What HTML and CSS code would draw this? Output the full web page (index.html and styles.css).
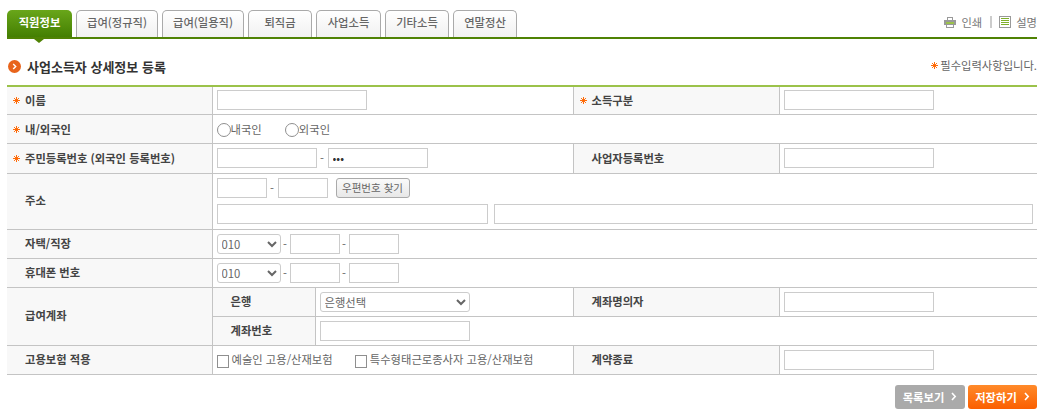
FILE: index.html
```html
<!DOCTYPE html>
<html lang="ko">
<head>
    <meta charset="UTF-8">
    <title>사업소득자 상세정보 등록</title>
    <link rel="stylesheet" href="styles.css">
</head>
<body>
    <div class="wrap">
        <div class="tabbar">
            <ul class="tabs">
                <li class="tab active w65">직원정보</li>
                <li class="tab w82">급여(정규직)</li>
                <li class="tab w82">급여(일용직)</li>
                <li class="tab w64">퇴직금</li>
                <li class="tab w65">사업소득</li>
                <li class="tab w64">기타소득</li>
                <li class="tab w64">연말정산</li>
            </ul>
            <div class="tools">
                <svg class="tool-icon" width="12" height="11" viewBox="0 0 12 11"><rect x="3.5" y="0.5" width="5" height="3" fill="#fff" stroke="#999"/><rect x="0" y="3" width="12" height="5" fill="#999"/><rect x="2" y="5" width="8" height="2" fill="#9bc24a"/><rect x="2.5" y="7.5" width="7" height="3" fill="#fff" stroke="#999"/></svg>
                <span>인쇄</span>
                <i class="sep"></i>
                <svg class="tool-icon" width="12" height="12" viewBox="0 0 12 12"><rect x="0.5" y="0.5" width="11" height="11" fill="#fff" stroke="#999"/><path d="M2 2.5h8M2 4.5h8M2 6.5h8M2 8.5h8" stroke="#7fb02a"/></svg>
                <span>설명</span>
            </div>
        </div>

        <div class="title-row">
            <h2 class="title">
                <svg width="13" height="13" viewBox="0 0 13 13"><circle cx="6.5" cy="6.5" r="6.5" fill="#e8641b"/><path d="M5.2 4l2.5 2.5-2.5 2.5" fill="none" stroke="#fff" stroke-width="1.4"/></svg>
                사업소득자 상세정보 등록
            </h2>
            <p class="req-note"><svg class="star" width="7" height="7" viewBox="0 0 8 8"><path d="M4 0v8M0 4h8M1.2 1.2l5.6 5.6M6.8 1.2l-5.6 5.6" stroke="#f60" stroke-width="1.1"/></svg>필수입력사항입니다.</p>
        </div>

        <table class="form-table">
            <colgroup>
                <col class="c-label"><col class="c-sub"><col class="c-subval"><col class="c-label2"><col class="c-val">
            </colgroup>
            <tr>
                <th><svg class="star mark" width="7" height="7" viewBox="0 0 8 8"><path d="M4 0v8M0 4h8M1.2 1.2l5.6 5.6M6.8 1.2l-5.6 5.6" stroke="#f60" stroke-width="1.1"/></svg>이름</th>
                <td colspan="2"><input class="in w150" type="text"></td>
                <th><svg class="star mark" width="7" height="7" viewBox="0 0 8 8"><path d="M4 0v8M0 4h8M1.2 1.2l5.6 5.6M6.8 1.2l-5.6 5.6" stroke="#f60" stroke-width="1.1"/></svg>소득구분</th>
                <td><input class="in w150" type="text"></td>
            </tr>
            <tr>
                <th><svg class="star mark" width="7" height="7" viewBox="0 0 8 8"><path d="M4 0v8M0 4h8M1.2 1.2l5.6 5.6M6.8 1.2l-5.6 5.6" stroke="#f60" stroke-width="1.1"/></svg>내/외국인</th>
                <td colspan="4">
                    <label class="opt opt-r"><input type="radio" name="nation">내국인</label>
                    <label class="opt opt-r"><input type="radio" name="nation">외국인</label>
                </td>
            </tr>
            <tr class="tall">
                <th><svg class="star mark" width="7" height="7" viewBox="0 0 8 8"><path d="M4 0v8M0 4h8M1.2 1.2l5.6 5.6M6.8 1.2l-5.6 5.6" stroke="#f60" stroke-width="1.1"/></svg>주민등록번호 (외국인 등록번호)</th>
                <td colspan="2"><input class="in w100" type="text"><span class="dash">-</span><input class="in w100" type="password" value="123"></td>
                <th>사업자등록번호</th>
                <td><input class="in w150" type="text"></td>
            </tr>
            <tr class="lift">
                <th>주소</th>
                <td colspan="4" class="addr-cell">
                    <div class="line">
                        <input class="in w50" type="text"><span class="dash">-</span><input class="in w50" type="text">
                        <button class="btn-zip" type="button">우편번호 찾기</button>
                    </div>
                    <div class="line addr">
                        <input class="in w271" type="text">
                        <input class="in w539" type="text">
                    </div>
                </td>
            </tr>
            <tr class="lift">
                <th>자택/직장</th>
                <td colspan="4"><select class="sel w64"><option>010</option></select><span class="dash-s">-</span><input class="in w50" type="text"><span class="dash-s">-</span><input class="in w50" type="text"></td>
            </tr>
            <tr class="lift">
                <th>휴대폰 번호</th>
                <td colspan="4"><select class="sel w64"><option>010</option></select><span class="dash-s">-</span><input class="in w50" type="text"><span class="dash-s">-</span><input class="in w50" type="text"></td>
            </tr>
            <tr class="lift">
                <th rowspan="2">급여계좌</th>
                <th>은행</th>
                <td><select class="sel w150"><option>은행선택</option></select></td>
                <th>계좌명의자</th>
                <td><input class="in w150" type="text"></td>
            </tr>
            <tr class="lift">
                <th>계좌번호</th>
                <td colspan="3"><input class="in w150" type="text"></td>
            </tr>
            <tr class="lift">
                <th>고용보험 적용</th>
                <td colspan="2" class="check-cell">
                    <label class="opt opt-c"><input type="checkbox">예술인 고용/산재보험</label>
                    <label class="opt"><input type="checkbox">특수형태근로종사자 고용/산재보험</label>
                </td>
                <th>계약종료</th>
                <td><input class="in w150" type="text"></td>
            </tr>
        </table>

        <div class="actions">
            <button class="act gray" type="button">목록보기<svg width="6" height="9" viewBox="0 0 6 9"><path d="M1 1l3.2 3.5L1 8" fill="none" stroke="#fff" stroke-width="1.6"/></svg></button>
            <button class="act orange" type="button">저장하기<svg width="6" height="9" viewBox="0 0 6 9"><path d="M1 1l3.2 3.5L1 8" fill="none" stroke="#fff" stroke-width="1.6"/></svg></button>
        </div>
    </div>
</body>
</html>
```

FILE: styles.css
```css
* {
    margin: 0;
    padding: 0;
    box-sizing: border-box;
    font-family: "Noto Sans CJK KR", "Noto Sans", sans-serif;
}

body {
    background-color: white;
    color: #666;
    font-size: 11.3px;
    overflow: hidden;
}

.wrap {
    width: 1030px;
    margin-left: 7px;
    padding-top: 10px;
}

/* tabs */
.tabbar {
    display: flex;
    justify-content: space-between;
    height: 29px;
    border-bottom: 2px solid #4f8204;
}

.tabs {
    display: flex;
    gap: 4px;
    list-style: none;
}

.tab {
    position: relative;
    height: 27px;
    line-height: 23px;
    text-align: center;
    color: #666;
    font-weight: 500;
    background: linear-gradient(to bottom, #fff, #f1f1f1);
    border: 1px solid #aaa;
    border-bottom: none;
    border-radius: 5px 5px 0 0;
}

.w65 { width: 65px; }
.w82 { width: 82px; }
.w64 { width: 64px; }

.tab.active {
    color: white;
    font-weight: 700;
    background: linear-gradient(to bottom, #69a61a, #447f02);
    border: none;
    line-height: 25px;
}

.tab.active::after {
    content: "";
    position: absolute;
    left: 27px;
    top: 29px;
    border: 5px solid transparent;
    border-top: 4px solid #4f8204;
    border-bottom: none;
}

.tools {
    display: flex;
    align-items: center;
    height: 24px;
    color: #777;
}

.tool-icon {
    margin-right: 5px;
}

.sep {
    width: 2px;
    height: 12px;
    background-color: #ccc;
    margin: 0 7px 0 8px;
}

/* title */
.title-row {
    display: flex;
    justify-content: space-between;
    align-items: center;
    height: 46px;
    padding-top: 8px;
}

.title {
    display: flex;
    align-items: center;
    gap: 6px;
    font-size: 13px;
    font-weight: 700;
    color: #333;
    margin-left: 1px;
}

.req-note {
    color: #666;
    margin-bottom: 2px;
}

.star {
    margin-right: 2px;
    vertical-align: 1px;
}

.star.mark {
    margin-left: -12px;
    margin-right: 5px;
}

/* form table */
.form-table {
    width: 1030px;
    table-layout: fixed;
    border-collapse: collapse;
    border-top: 2px solid #9bc24a;
}

.c-label { width: 205px; }
.c-sub { width: 103px; }
.c-subval { width: 258px; }
.c-label2 { width: 206px; }
.c-val { width: 258px; }

.form-table th,
.form-table td {
    height: 29px;
    border: 1px solid #c4c4c4;
    vertical-align: middle;
}

.form-table tr.tall > * {
    height: 30px;
}

.form-table tr > :last-child {
    border-right: none;
}

.form-table tr > th:first-child {
    border-left: none;
}

.form-table th {
    padding-left: 18px;
    text-align: left;
    font-weight: 700;
    color: #444;
    background-color: #f8f8f8;
}

.form-table tr.lift > th {
    padding-bottom: 2px;
}

.form-table td {
    padding-left: 4px;
}

.form-table tr:first-child > * {
    border-top: none;
    height: 28px;
}

.form-table td.addr-cell {
    height: 56px;
    padding-bottom: 1px;
}

.form-table td.check-cell {
    padding-bottom: 2px;
}

.in {
    height: 20px;
    border: 1px solid #ccc;
    background-color: white;
    color: #333;
    vertical-align: middle;
    padding: 0 4px;
    font-size: 11.3px;
}

.w50 { width: 50px; }
.w100 { width: 100px; }
.w150 { width: 150px; }
.w271 { width: 271px; }
.w539 { width: 539px; }

.dash {
    display: inline-block;
    width: 11px;
    text-align: center;
    vertical-align: middle;
}

.dash-s {
    display: inline-block;
    width: 9px;
    text-align: center;
    vertical-align: middle;
}

.sel {
    height: 20px;
    border: 1px solid #ccc;
    border-radius: 3px;
    background-color: white;
    color: #666;
    font-size: 11.3px;
    vertical-align: middle;
}

.sel.w64 {
    width: 64px;
}

.opt {
    display: inline-flex;
    align-items: center;
    vertical-align: middle;
}

.opt input {
    appearance: none;
    background-color: white;
    border: 1px solid #8f8f8f;
}

.opt input[type="radio"] {
    width: 14px;
    height: 14px;
    margin: 1px 0 0 0;
    border-radius: 50%;
}

.opt input[type="checkbox"] {
    width: 12px;
    height: 13px;
    margin: 4px 3px 0 0;
}

.opt label + label {
    margin-left: 0;
}

.opt-r { margin-right: 20px; }
.opt-c { margin-right: 19px; }

.line {
    display: flex;
    align-items: center;
}

.addr {
    gap: 6px;
    margin-top: 6px;
}

.btn-zip {
    width: 74px;
    height: 20px;
    margin-left: 8px;
    border: 1px solid #aaa;
    border-radius: 3px;
    background: linear-gradient(to bottom, #fafafa, #e8e8e8);
    color: #666;
    font-size: 10.5px;
}

/* bottom buttons */
.actions {
    display: flex;
    justify-content: flex-end;
    gap: 3px;
    padding-top: 10px;
}

.act {
    display: flex;
    align-items: center;
    justify-content: center;
    gap: 7px;
    height: 24px;
    border: none;
    border-radius: 3px;
    color: white;
    font-size: 11.3px;
    font-weight: 700;
}

.act.gray {
    width: 70px;
    background-color: #aaa;
}

.act.orange {
    width: 69px;
    background: linear-gradient(to bottom, #ff8a2a, #fb5f00);
}
```
